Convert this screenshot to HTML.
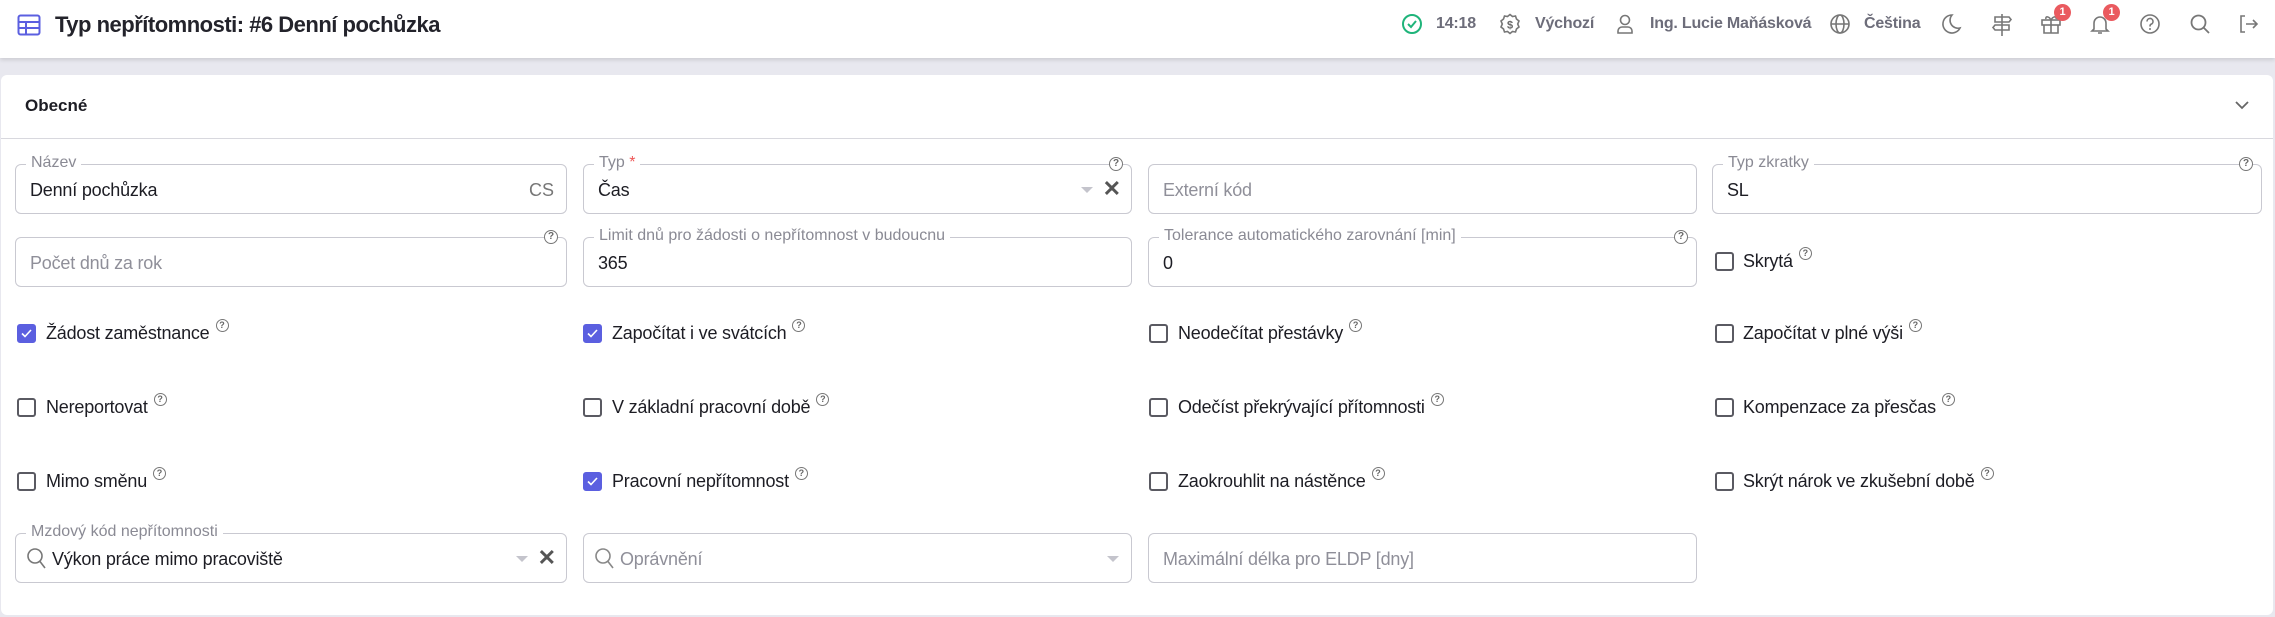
<!DOCTYPE html>
<html><head><meta charset="utf-8">
<style>
*{box-sizing:border-box;margin:0;padding:0}
body{width:2275px;height:617px;background:#e8e8ef;font-family:"Liberation Sans",Arial,sans-serif;position:relative;overflow:hidden;color:#1d1d24}
.hdr{position:absolute;left:0;top:0;width:2275px;height:58px;background:#fff;box-shadow:0 2px 4px rgba(0,0,0,.12)}
.title{position:absolute;left:55px;top:12px;font-size:22px;font-weight:bold;color:#23232b;letter-spacing:-0.5px}
.ht{position:absolute;top:15px;font-size:16px;color:#6d6d7a;font-weight:bold;letter-spacing:-0.2px}
.ic{position:absolute;top:13px}
.badge{position:absolute;top:4px;width:17px;height:17px;border-radius:50%;background:#ea5a5f;color:#fff;font-size:11px;font-weight:bold;text-align:center;line-height:17px}
.card{position:absolute;left:1px;top:75px;width:2272px;height:540px;background:#fff;border-radius:6px}
.sec{position:absolute;left:25px;top:96px;font-size:17px;font-weight:bold;color:#1d1d24}
.div{position:absolute;left:1px;top:138px;width:2272px;height:1px;background:#d8d8de}
.f{position:absolute;height:50px;border:1px solid #c9c9d1;border-radius:6px}
.lab{position:absolute;top:-11px;left:10px;background:#fff;padding:0 5px;font-size:16px;color:#8a8a94;white-space:nowrap}
.val{position:absolute;left:14px;top:15px;font-size:18px;color:#1d1d24;white-space:nowrap;letter-spacing:-0.2px}
.ph{color:#8f8f99}
.q{position:absolute;top:-8px;right:8px;width:14px;height:14px;border:1.3px solid #777;border-radius:50%;font-size:10px;line-height:12px;text-align:center;color:#666;background:#fff;font-weight:bold}
.cb{position:absolute;width:19px;height:19px;border:2px solid #5a5a62;border-radius:3px;background:#fff}
.cb.on{background:#5b5fe0;border-color:#5b5fe0}
.cl{position:absolute;font-size:18px;color:#1d1d24;white-space:nowrap;letter-spacing:-0.2px}
.sq{display:inline-block;width:13px;height:13px;border:1.2px solid #777;border-radius:50%;font-size:9px;line-height:11px;text-align:center;color:#666;vertical-align:top;margin-left:6px;margin-top:-4px;font-weight:bold;letter-spacing:0}
.x{position:absolute;right:10px;top:11px;font-size:22px;color:#555;font-weight:bold}
.tri{position:absolute;top:22px;width:0;height:0;border-left:6px solid transparent;border-right:6px solid transparent;border-top:6px solid #c4c4cc}
</style></head><body>
<div class="hdr">
<svg class="ic" style="left:17px;top:14px" width="24" height="22" viewBox="0 0 24 22"><rect x="1.5" y="1.5" width="21" height="19" rx="2" fill="none" stroke="#5b5fe0" stroke-width="2"/><line x1="1.5" y1="8" x2="22.5" y2="8" stroke="#5b5fe0" stroke-width="2"/><line x1="1.5" y1="14" x2="22.5" y2="14" stroke="#5b5fe0" stroke-width="2"/><line x1="9" y1="8" x2="9" y2="20" stroke="#5b5fe0" stroke-width="2"/></svg>
<div class="title">Typ nepřítomnosti: #6 Denní pochůzka</div>
<svg class="ic" style="left:1401px" width="22" height="22" viewBox="0 0 22 22"><circle cx="11" cy="11" r="9" fill="none" stroke="#1fb47a" stroke-width="2"/><path d="M7 11l3 3 5-6" fill="none" stroke="#1fb47a" stroke-width="2"/></svg>
<div class="ht" style="left:1436px">14:18</div>
<svg class="ic" style="left:1499px" width="22" height="22" viewBox="0 0 22 22"><path d="M11 1.5l2.5 2 3-.5 1 3 2.5 2-1.3 3 1.3 3-2.5 2-1 3-3-.5-2.5 2-2.5-2-3 .5-1-3-2.5-2 1.3-3-1.3-3 2.5-2 1-3 3 .5z" fill="none" stroke="#777" stroke-width="1.6"/><text x="11" y="15.5" font-size="11" text-anchor="middle" fill="#666" font-family="Liberation Sans" font-weight="bold">$</text></svg>
<div class="ht" style="left:1535px">Výchozí</div>
<svg class="ic" style="left:1615px" width="20" height="22" viewBox="0 0 20 22"><circle cx="10" cy="7" r="4.5" fill="none" stroke="#777" stroke-width="1.6"/><path d="M3 20v-2a4 4 0 0 1 4-4h6a4 4 0 0 1 4 4v2z" fill="none" stroke="#777" stroke-width="1.6"/></svg>
<div class="ht" style="left:1650px">Ing. Lucie Maňásková</div>
<svg class="ic" style="left:1829px" width="22" height="22" viewBox="0 0 22 22"><circle cx="11" cy="11" r="9" fill="none" stroke="#777" stroke-width="1.6"/><ellipse cx="11" cy="11" rx="4" ry="9" fill="none" stroke="#777" stroke-width="1.6"/><line x1="2" y1="11" x2="20" y2="11" stroke="#777" stroke-width="1.6"/></svg>
<div class="ht" style="left:1864px">Čeština</div>
<svg class="ic" style="left:1940px" width="22" height="22" viewBox="0 0 22 22"><path d="M12 2a9 9 0 1 0 8 13A8 8 0 0 1 12 2z" fill="none" stroke="#777" stroke-width="1.6"/></svg>
<svg class="ic" style="left:1991px" width="22" height="24" viewBox="0 0 22 24"><path d="M11 1v22M4 4h14l2 2.5-2 2.5H4zM18 12H4l-2 2.5 2 2.5h14z" fill="none" stroke="#777" stroke-width="1.6"/></svg>
<svg class="ic" style="left:2040px" width="22" height="22" viewBox="0 0 22 22"><rect x="2" y="7" width="18" height="5" fill="none" stroke="#777" stroke-width="1.6"/><path d="M4 12v8h14v-8M11 7v13M11 7C9 3 5 3 6 6M11 7c2-4 6-4 5-1" fill="none" stroke="#777" stroke-width="1.6"/></svg>
<div class="badge" style="left:2054px">1</div>
<svg class="ic" style="left:2089px" width="22" height="22" viewBox="0 0 22 22"><path d="M5 16V10a6 6 0 0 1 12 0v6l2 2H3zM9 20h4" fill="none" stroke="#777" stroke-width="1.6"/></svg>
<div class="badge" style="left:2103px">1</div>
<svg class="ic" style="left:2139px" width="22" height="22" viewBox="0 0 22 22"><circle cx="11" cy="11" r="9" fill="none" stroke="#777" stroke-width="1.6"/><path d="M8 8.5a3 3 0 1 1 4 2.8c-1 .4-1 1-1 2.2" fill="none" stroke="#777" stroke-width="1.6"/><circle cx="11" cy="16" r="1" fill="#777"/></svg>
<svg class="ic" style="left:2189px" width="22" height="22" viewBox="0 0 22 22"><circle cx="9.5" cy="9.5" r="7" fill="none" stroke="#777" stroke-width="1.8"/><line x1="14.5" y1="14.5" x2="20" y2="20" stroke="#777" stroke-width="1.8"/></svg>
<svg class="ic" style="left:2237px" width="22" height="22" viewBox="0 0 22 22"><path d="M8 3H4v16h4M9 11h11M16 7l4 4-4 4" fill="none" stroke="#777" stroke-width="1.6"/></svg>
</div>

<div class="card"></div>
<div class="sec">Obecné</div>
<svg style="position:absolute;left:2234px;top:100px" width="16" height="10" viewBox="0 0 16 10"><path d="M2 2l6 6 6-6" fill="none" stroke="#666" stroke-width="1.8"/></svg>
<div class="div"></div>

<div class="f" style="left:15px;top:164px;width:552px"><div class="lab">Název</div><div class="val">Denní pochůzka</div><div style="position:absolute;right:12px;top:15px;font-size:18px;color:#777">CS</div></div>
<div class="f" style="left:583px;top:164px;width:549px"><div class="lab">Typ <span style="color:#e55">*</span></div><div class="q">?</div><div class="val">Čas</div><div class="tri" style="right:38px"></div><div class="x">✕</div></div>
<div class="f" style="left:1148px;top:164px;width:549px"><div class="val ph">Externí kód</div></div>
<div class="f" style="left:1712px;top:164px;width:550px"><div class="lab">Typ zkratky</div><div class="q">?</div><div class="val">SL</div></div>

<div class="f" style="left:15px;top:237px;width:552px"><div class="q">?</div><div class="val ph">Počet dnů za rok</div></div>
<div class="f" style="left:583px;top:237px;width:549px"><div class="lab">Limit dnů pro žádosti o nepřítomnost v budoucnu</div><div class="val">365</div></div>
<div class="f" style="left:1148px;top:237px;width:549px"><div class="lab">Tolerance automatického zarovnání [min]</div><div class="q">?</div><div class="val">0</div></div>
<div class="cb" style="left:1715px;top:252px"></div><div class="cl" style="left:1743px;top:251px">Skrytá<span class="sq">?</span></div>

<div class="cb on" style="left:17px;top:324px"><svg width="15" height="15" viewBox="0 0 15 15"><path d="M3 7.5l3 3 6-6.5" fill="none" stroke="#fff" stroke-width="1.6"/></svg></div><div class="cl" style="left:46px;top:323px">Žádost zaměstnance<span class="sq">?</span></div>
<div class="cb on" style="left:583px;top:324px"><svg width="15" height="15" viewBox="0 0 15 15"><path d="M3 7.5l3 3 6-6.5" fill="none" stroke="#fff" stroke-width="1.6"/></svg></div><div class="cl" style="left:612px;top:323px">Započítat i ve svátcích<span class="sq">?</span></div>
<div class="cb" style="left:1149px;top:324px"></div><div class="cl" style="left:1178px;top:323px">Neodečítat přestávky<span class="sq">?</span></div>
<div class="cb" style="left:1715px;top:324px"></div><div class="cl" style="left:1743px;top:323px">Započítat v plné výši<span class="sq">?</span></div>

<div class="cb" style="left:17px;top:398px"></div><div class="cl" style="left:46px;top:397px">Nereportovat<span class="sq">?</span></div>
<div class="cb" style="left:583px;top:398px"></div><div class="cl" style="left:612px;top:397px">V základní pracovní době<span class="sq">?</span></div>
<div class="cb" style="left:1149px;top:398px"></div><div class="cl" style="left:1178px;top:397px">Odečíst překrývající přítomnosti<span class="sq">?</span></div>
<div class="cb" style="left:1715px;top:398px"></div><div class="cl" style="left:1743px;top:397px">Kompenzace za přesčas<span class="sq">?</span></div>

<div class="cb" style="left:17px;top:472px"></div><div class="cl" style="left:46px;top:471px">Mimo směnu<span class="sq">?</span></div>
<div class="cb on" style="left:583px;top:472px"><svg width="15" height="15" viewBox="0 0 15 15"><path d="M3 7.5l3 3 6-6.5" fill="none" stroke="#fff" stroke-width="1.6"/></svg></div><div class="cl" style="left:612px;top:471px">Pracovní nepřítomnost<span class="sq">?</span></div>
<div class="cb" style="left:1149px;top:472px"></div><div class="cl" style="left:1178px;top:471px">Zaokrouhlit na nástěnce<span class="sq">?</span></div>
<div class="cb" style="left:1715px;top:472px"></div><div class="cl" style="left:1743px;top:471px">Skrýt nárok ve zkušební době<span class="sq">?</span></div>

<div class="f" style="left:15px;top:533px;width:552px"><div class="lab">Mzdový kód nepřítomnosti</div>
<svg style="position:absolute;left:10px;top:13px" width="22" height="24" viewBox="0 0 22 24"><circle cx="9" cy="9" r="7" fill="none" stroke="#777" stroke-width="1.6"/><line x1="14" y1="14.5" x2="19" y2="21" stroke="#777" stroke-width="1.6"/></svg>
<div class="val" style="left:36px">Výkon práce mimo pracoviště</div><div class="tri" style="right:38px"></div><div class="x">✕</div></div>
<div class="f" style="left:583px;top:533px;width:549px">
<svg style="position:absolute;left:10px;top:13px" width="22" height="24" viewBox="0 0 22 24"><circle cx="9" cy="9" r="7" fill="none" stroke="#888" stroke-width="1.6"/><line x1="14" y1="14.5" x2="19" y2="21" stroke="#888" stroke-width="1.6"/></svg>
<div class="val ph" style="left:36px">Oprávnění</div><div class="tri" style="right:12px"></div></div>
<div class="f" style="left:1148px;top:533px;width:549px"><div class="val ph">Maximální délka pro ELDP [dny]</div></div>
</body></html>
